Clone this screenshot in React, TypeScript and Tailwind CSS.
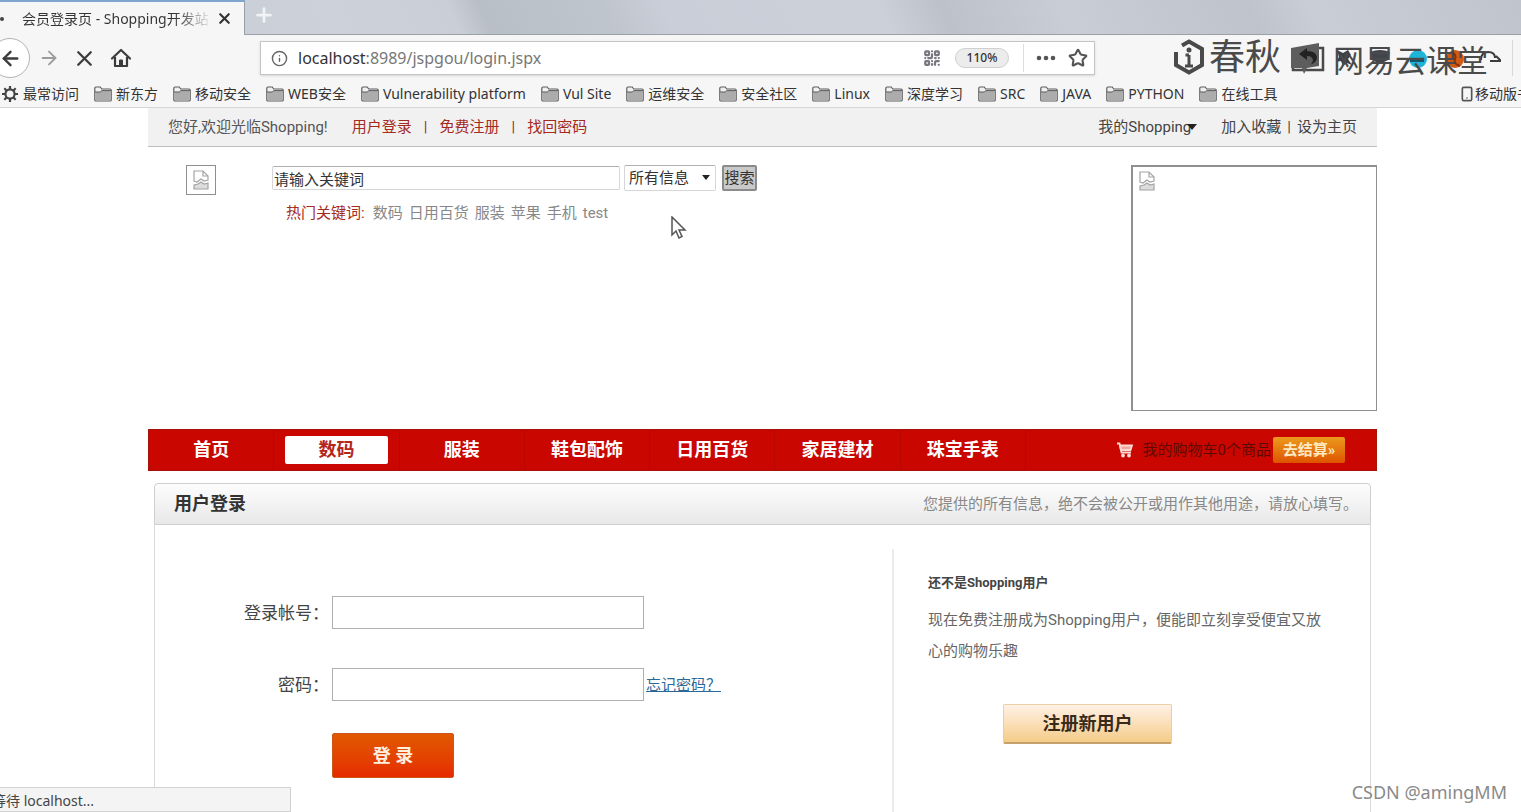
import React from 'react';
import { ArrowLeft, ArrowRight, Info, Plus, QrCode, Smartphone, Star, X } from 'lucide-react';

const bookmarks = [
    '新东方',
    '移动安全',
    'WEB安全',
    'Vulnerability platform',
    'Vul Site',
    '运维安全',
    '安全社区',
    'Linux',
    '深度学习',
    'SRC',
    'JAVA',
    'PYTHON',
    '在线工具',
];

const categories = ['首页', '数码', '服装', '鞋包配饰', '日用百货', '家居建材', '珠宝手表'];

const hotWords = ['数码', '日用百货', '服装', '苹果', '手机', 'test'];

const FolderIcon: React.FC = () => (
    <svg className="h-4 w-[18px] shrink-0" viewBox="0 0 18 16" fill="none" stroke="#5c5c5c">
        <path d="M.8 14V2.2Q.8 1 2 1h4.2l1.6 2H16q1.200 0 1.200 1.200V14q0 1-1.200 1H2q-1.200 0-1.200-1z" fill="#f0f0f0" strokeWidth="1.200" />
        <path d="M1.500 6h4.700l1.600-1.400h8.700V14.200h-15z" fill="#acacac" stroke="none" />
        <path d="M1 6h5.200l1.600-1.400H17" />
    </svg>
);

const GearIcon: React.FC = () => (
    <svg className="h-[18px] w-[18px] shrink-0" viewBox="0 0 18 18" fill="none" stroke="#444" strokeWidth="2.200">
        <circle cx="9" cy="9" r="4.600" />
        <path d="M9 1v3M9 14v3M1 9h3M14 9h3M3.300 3.300l2.200 2.200M12.500 12.500l2.200 2.200M3.300 14.700l2.200-2.200M12.500 5.500l2.200-2.200" />
    </svg>
);

const HomeIcon: React.FC = () => (
    <svg className="h-5 w-5" viewBox="0 0 20 20" fill="none" stroke="#3c3c3c" strokeWidth="2.200" strokeLinejoin="round">
        <path d="M1 10.500L10 2l9 8.500" strokeLinecap="round" />
        <path d="M4 9v9h12V9" />
        <path d="M8.500 18v-6h3v6z" fill="#3c3c3c" strokeWidth="1" />
    </svg>
);

const BrokenImage: React.FC = () => (
    <svg className="h-5 w-4" viewBox="0 0 16 20" fill="none" stroke="#a3a3a3" strokeWidth="1.200">
        <path d="M1 11V1h9l5 5v4l-4 1-3-2-4 3z" />
        <path d="M10 1v5h5" />
        <path d="M1 19v-4l4-1 3-2 3 2 4-1v6z" fill="#dcdcdc" />
    </svg>
);

const TabStrip: React.FC = () => (
    <div className="flex h-[35px] shrink-0 border-b border-[#9a9fa8] bg-[linear-gradient(65deg,#c3c8d0_0%,#cdd2da_22%,#c9ced7_30%,#b9bfc7_32%,#bfc5cd_40%,#c9ced8_44%,#cbd0d9_58%,#bcc1ca_62%,#c8cdd6_70%,#bfc4cc_82%,#c9ced6_86%,#c0c5cd_100%)]">
        <div className="-mb-px flex w-[245px] items-center border-t-2 border-r border-t-[#7ea6d0] border-r-[#9a9fa8] bg-[#f6f6f6]">
            <span className="h-1 w-1 rounded-full bg-[#444]" />
            <span className="ml-[18px] w-[190px] overflow-hidden bg-linear-to-r from-[#333] from-80% to-[#f6f6f6] bg-clip-text text-sm leading-5 whitespace-nowrap text-transparent">
                会员登录页 - Shopping开发站
            </span>
            <button aria-label="关闭标签页" className="ml-1">
                <X size={17} strokeWidth={3} color="#333" />
            </button>
        </div>
        <button aria-label="新标签页" className="ml-2 self-start pt-1">
            <Plus size={22} strokeWidth={3} color="#f1f3f6" />
        </button>
    </div>
);

const Watermark: React.FC = () => (
    <div className="pointer-events-none absolute top-0 left-[78px] flex h-[44px] items-center text-[#4a4a4a]">
        <svg className="h-9 w-8" viewBox="0 0 32 36" fill="none" stroke="currentColor" strokeWidth="4">
            <path d="M9 6.500L16 2.500l13 7.500v16L16 33.500 3 26V13" />
            <path d="M16 16v12M12.500 16H16M12 27h8" strokeWidth="3" />
            <circle cx="16" cy="11" r="2.500" fill="currentColor" stroke="none" />
        </svg>
        <span className="ml-1 text-4xl leading-9">春秋</span>
        <svg className="ml-2 h-9 w-9" viewBox="0 0 36 36" fill="none">
            <path d="M28 9h6v22H4V12" stroke="currentColor" strokeWidth="2.500" />
            <path d="M2 9l28-5v23l-12 2-3 6-2-6H2z" fill="#5d5d5d" />
            <path d="M18 9l-8 6 8 6v-4q6 0 6 5-1 3-4 4 8-2 8-8-1-6-10-6z" fill="#222" />
        </svg>
        <span className="mt-1.5 ml-2 text-[31px] leading-9">网易云课堂</span>
    </div>
);

const Toolbar: React.FC = () => (
    <div className="flex h-[46px] shrink-0 items-center">
        <div className="flex w-[260px] shrink-0 items-center">
            <button aria-label="后退" className="-ml-2.5 flex h-10 w-10 items-center justify-center rounded-full border border-[#b3b3b3] bg-white">
                <ArrowLeft size={23} strokeWidth={2.500} color="#3c3c3c" />
            </button>
            <button aria-label="前进" className="ml-2">
                <ArrowRight size={22} color="#9c9c9c" />
            </button>
            <button aria-label="停止" className="ml-3">
                <X size={25} strokeWidth={2.200} color="#3c3c3c" />
            </button>
            <button aria-label="主页" className="ml-3.5">
                <HomeIcon />
            </button>
        </div>
        <div className="flex h-[34px] min-w-0 flex-1 items-center border border-[#c4c4c4] bg-white pr-1.5 pl-2.5 shadow-sm">
            <Info size={17} color="#666" />
            <div className="ml-2.5 flex-1 text-base leading-6 text-[#777]">
                <span className="text-[#333]">localhost</span>:8989/jspgou/login.jspx
            </div>
            <QrCode size={18} strokeWidth={3} color="#77777f" />
            <span className="ml-3.5 w-[54px] rounded-full border border-[#d0d0d0] bg-[#ececec] text-center text-xs leading-[18px] font-medium text-[#333]">
                110%
            </span>
            <span className="ml-3.5 h-7 border-l border-[#ddd]" />
            <svg className="ml-3 h-1.5 w-5" viewBox="0 0 20 6" fill="#555">
                <circle cx="3" cy="3" r="2.300" />
                <circle cx="10" cy="3" r="2.300" />
                <circle cx="17" cy="3" r="2.300" />
            </svg>
            <Star size={20} strokeWidth={2.500} color="#555" className="ml-3" />
        </div>
        <div className="relative flex h-full w-[426px] shrink-0 items-center">
            <svg className="ml-[240px] h-8 w-[166px]" viewBox="0 0 166 32">
                <path d="M2 8l6 3 5-3 3 5-3 4 4 6-5-2-4 3-2-5-5 1 3-5z" fill="#3d4148" />
                <path d="M35 10q10-4 20 0l-2 8q-8 5-16 0z" fill="#40454e" />
                <circle cx="83" cy="17" r="9" fill="#1eb4d8" />
                <path d="M75 19h14" stroke="#16566c" strokeWidth="2" />
                <circle cx="120" cy="17" r="9" fill="#cf5a14" />
                <path d="M116 10q6 2 4 7t5 7" stroke="#8c2f0a" strokeWidth="2" fill="none" />
                <path d="M146 18q0-8 7-8t7 6M155 19h11l-5-5" stroke="#3c3c3c" strokeWidth="2" fill="none" />
            </svg>
            <Watermark />
            <span className="ml-auto mr-2 h-9 border-l border-[#d8d8d8]" />
        </div>
    </div>
);

const BookmarkBar: React.FC = () => (
    <div className="flex h-[27px] shrink-0 items-center gap-[15px] overflow-hidden border-b border-[#d4d6d6] text-sm leading-5 whitespace-nowrap text-[#333]">
        <a href="#frequent" className="flex items-center gap-1 pl-px">
            <GearIcon />
            最常访问
        </a>
        {bookmarks.map((name) => (
            <a key={name} href="#bookmark" className="flex items-center gap-1">
                <FolderIcon />
                {name}
            </a>
        ))}
        <a href="#mobile" className="ml-auto flex w-[62px] shrink-0 items-center overflow-hidden">
            <Smartphone size={16} strokeWidth={2.500} color="#555" className="shrink-0" />
            移动版书签
        </a>
    </div>
);

const TopBar: React.FC = () => (
    <div className="flex h-[39px] items-center border-b border-[#bdbdbd] bg-[#f2f1f2] px-5 text-[15px] leading-5 text-[#555]">
        <span>您好,欢迎光临Shopping!</span>
        <div className="ml-6 flex gap-3 text-[#a32a1c]">
            <a href="#login">用户登录</a>
            <span>|</span>
            <a href="#register">免费注册</a>
            <span>|</span>
            <a href="#find">找回密码</a>
        </div>
        <div className="ml-auto flex text-[#444]">
            <a href="#my" className="flex items-center">
                我的Shopping
                <svg className="-ml-1 h-1.5 w-2.5" viewBox="0 0 10 6" fill="#222">
                    <path d="M0 0h10L5 6z" />
                </svg>
            </a>
            <a href="#fav" className="ml-6">加入收藏</a>
            <span className="mx-1.5">|</span>
            <a href="#home">设为主页</a>
        </div>
    </div>
);

const SearchHeader: React.FC = () => (
    <div className="flex h-[282px] items-start pt-[18px]">
        <div className="ml-[38px] flex h-[30px] w-[30px] items-center justify-center border border-[#8f8f8f]">
            <BrokenImage />
        </div>
        <div className="ml-14">
            <form className="flex items-center text-[15px] leading-5 text-[#333]">
                <input
                    aria-label="关键词"
                    defaultValue="请输入关键词"
                    className="h-6 w-[348px] rounded-xs border border-[#d6d6d6] border-t-[#b0b0b0] bg-white px-px"
                />
                <div className="relative ml-1">
                    <select
                        aria-label="信息分类"
                        className="h-[26px] w-[92px] appearance-none rounded-xs border border-[#d6d6d6] border-t-[#b0b0b0] bg-white pl-1"
                    >
                        <option>所有信息</option>
                    </select>
                    <svg className="pointer-events-none absolute top-2.5 right-1.5 h-1.5 w-2" viewBox="0 0 8 6" fill="#222">
                        <path d="M0 0h8L4 5z" />
                    </svg>
                </div>
                <button type="button" className="ml-1.5 h-[26px] w-[35px] rounded-xs border-2 border-[#8b8b8b] bg-[#c9c9c9] text-center">
                    <span className="-mx-1">搜索</span>
                </button>
            </form>
            <div className="mt-3 ml-3.5 flex gap-1.5 text-[15px] leading-5 text-[#888]">
                <span className="mr-0.5 text-[#a32a1c]">热门关键词:</span>
                {hotWords.map((word) => (
                    <a key={word} href="#search">{word}</a>
                ))}
            </div>
        </div>
        <div className="ml-auto h-[246px] w-[246px] border-2 border-r border-b border-[#8f8f8f] px-1.5 py-1">
            <BrokenImage />
        </div>
    </div>
);

const CategoryNav: React.FC = () => (
    <nav className="flex h-[42px] items-center border border-[#a51208] bg-[#c90700] pr-[31px]">
        <div className="grid h-full w-[877px] grid-cols-7">
            {categories.map((name) => (
                <a
                    key={name}
                    href="#category"
                    className="flex items-center justify-center border-r border-[#bb0600] text-lg leading-6 font-bold text-white"
                >
                    {name === '数码' ? (
                        <span className="w-[103px] rounded-xs bg-white py-0.5 text-center text-[#b5261a]">{name}</span>
                    ) : (
                        name
                    )}
                </a>
            ))}
        </div>
        <div className="ml-auto flex items-center text-[15px] leading-5 text-[#5c0a00]">
            <svg className="mr-2.5 h-4 w-4" viewBox="0 0 16 16" fill="none" stroke="#fbd9d4" strokeWidth="1.800">
                <path d="M0 1.500h2.500l2 9H14" />
                <path d="M3 3.500h12l-1.500 4.500H4z" fill="#f0a49c" />
                <circle cx="6" cy="13.500" r="1" />
                <circle cx="12" cy="13.500" r="1" />
            </svg>
            我的购物车0个商品
            <button className="ml-0.5 h-[26px] w-[72px] rounded-xs bg-linear-to-b from-[#eb9a1c] to-[#dd5200] font-bold text-[#ffe9c0]">
                去结算»
            </button>
        </div>
    </nav>
);

const LoginPanel: React.FC = () => (
    <section className="mx-1.5 mt-3">
        <header className="flex h-[42px] items-center justify-between rounded-t-sm border border-[#cfcfcf] bg-linear-to-b from-[#fdfdfd] to-[#e8e8e8] pr-3 pl-[19px]">
            <h1 className="text-lg leading-6 font-bold text-[#333]">用户登录</h1>
            <p className="text-[15px] leading-5 text-[#888]">您提供的所有信息，绝不会被公开或用作其他用途，请放心填写。</p>
        </header>
        <div className="flex h-[420px] border-x border-[#d9d9d9] pt-6">
            <form className="grid flex-1 grid-cols-[174px_1fr] content-start items-center gap-x-[3px] pt-[47px] text-[17px] leading-6 text-[#444]">
                <label htmlFor="account" className="text-right">登录帐号：</label>
                <input id="account" type="text" className="h-[33px] w-[312px] border border-[#b0b0b0] bg-white px-2" />
                <label htmlFor="password" className="mt-[39px] text-right">密码：</label>
                <div className="mt-[39px] flex items-center">
                    <input id="password" type="password" className="h-[33px] w-[312px] border border-[#b0b0b0] bg-white px-2" />
                    <a href="#forgot" className="ml-0.5 text-[15px] leading-5 text-[#2b6898] underline">忘记密码？</a>
                </div>
                <button
                    type="button"
                    className="col-start-2 mt-8 h-[45px] w-[122px] rounded-xs border border-[#c9571a] bg-linear-to-b from-[#e15800] to-[#e52a00] text-lg leading-6 font-bold text-[#fff0e0]"
                >
                    登 录
                </button>
            </form>
            <aside className="w-[478px] border-l-2 border-[#ebebeb] pt-6 pr-11 pl-[34px]">
                <h2 className="text-[13px] leading-5 font-bold text-[#444]">还不是Shopping用户</h2>
                <p className="mt-3 text-[15px] leading-[31px] text-[#666]">
                    现在免费注册成为Shopping用户，便能即立刻享受便宜又放心的购物乐趣
                </p>
                <button className="mt-[37px] ml-[75px] h-10 w-[169px] rounded-xs border border-b-2 border-[#ebcfa2] border-b-[#c5a26c] bg-linear-to-b from-[#fff1e6] to-[#f5cc87] text-lg leading-6 font-bold text-[#3a2a1a]">
                    注册新用户
                </button>
            </aside>
        </div>
    </section>
);

const App: React.FC = () => {
    return (
        <div className="relative flex h-screen flex-col overflow-hidden bg-[#f6f6f6] font-['Noto_Sans','Noto_Sans_CJK_SC',sans-serif]">
            <TabStrip />
            <Toolbar />
            <BookmarkBar />
            <main className="min-h-0 flex-1 overflow-hidden bg-white pr-36 pl-[148px] font-[Roboto,'Noto_Sans_CJK_SC',sans-serif]">
                <TopBar />
                <SearchHeader />
                <CategoryNav />
                <LoginPanel />
            </main>

            <div className="absolute bottom-0 left-0 h-[25px] w-[291px] overflow-hidden border border-l-0 border-[#d2d2d2] bg-[#f4f4f4] text-sm leading-[26px] whitespace-nowrap text-[#444]">
                <span className="-ml-2">等待 localhost...</span>
            </div>
            <svg className="pointer-events-none absolute top-[216px] left-[671px] h-6 w-4" viewBox="0 0 16 24" fill="#fff" stroke="#555" strokeWidth="1.500">
                <path d="M1 1v18l4-4 3 7 3-1.500-3-6.500h6z" />
            </svg>
            <span className="pointer-events-none absolute right-3.5 bottom-2 text-lg leading-6 text-[#8a8a8a]">CSDN @amingMM</span>
        </div>
    );
};

export default App;
